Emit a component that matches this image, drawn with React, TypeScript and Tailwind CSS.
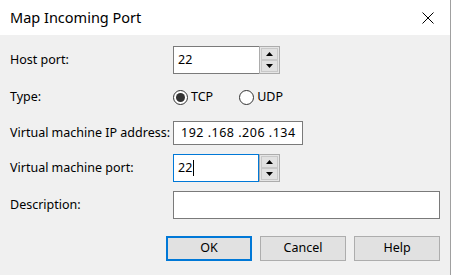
const font = { fontFamily: '"Noto Sans", "Liberation Sans", sans-serif' };

function Spinner({ value, focused }: { value: string; focused?: boolean }) {
  return (
    <div className="flex h-[28px] w-[107px]">
      <div
        className={
          'flex flex-1 items-center border bg-white pl-[4px] text-black ' +
          (focused ? 'border-[#0078d7]' : 'border-[#7a7a7a] border-r-0')
        }
      >
        {value}
        {focused && <span className="ml-[1px] h-[16px] w-[1px] bg-black" />}
      </div>
      <div className="flex w-[21px] flex-col border border-[#acacac] bg-[#e5e5e5] p-[1px]">
        <div className="flex flex-1 items-center justify-center border border-[#c8c8c8] bg-[#e1e1e1]">
          <svg width="7" height="4" viewBox="0 0 7 4">
            <path d="M3.5 0 L7 4 L0 4 Z" fill="#000" />
          </svg>
        </div>
        <div className="flex flex-1 items-center justify-center border border-[#c8c8c8] bg-[#e1e1e1]">
          <svg width="7" height="4" viewBox="0 0 7 4">
            <path d="M0 0 L7 0 L3.5 4 Z" fill="#000" />
          </svg>
        </div>
      </div>
    </div>
  );
}

function Radio({ label, checked }: { label: string; checked?: boolean }) {
  return (
    <div className="flex items-center gap-[3px]">
      <span className="flex h-[15px] w-[15px] items-center justify-center rounded-full border border-[#333] bg-white">
        {checked && <span className="h-[9px] w-[9px] rounded-full bg-[#333]" />}
      </span>
      <span>{label}</span>
    </div>
  );
}

function Button({ label, primary }: { label: string; primary?: boolean }) {
  return (
    <div
      className={
        'flex h-[25px] w-[86px] items-center justify-center bg-[#e1e1e1] text-black ' +
        (primary ? 'border-2 border-[#0078d7]' : 'border border-[#adadad]')
      }
    >
      {label}
    </div>
  );
}

export default function App() {
  return (
    <div
      className="flex h-[275px] w-[451px] flex-col overflow-hidden border-r border-[#a0a0a0] bg-[#f0f0f0] text-[12.5px] text-black"
      style={font}
    >
      <div className="flex h-[35px] shrink-0 items-center justify-between bg-white pl-[10px] pr-[16px]">
        <span className="text-[14.5px] text-[#000]">Map Incoming Port</span>
        <svg width="12" height="12" viewBox="0 0 12 12">
          <path d="M0.5 0.5 L11.5 11.5 M11.5 0.5 L0.5 11.5" stroke="#000" strokeWidth="1" />
        </svg>
      </div>

      <div className="flex flex-col pl-[10px]">
        <div className="mt-[11px] flex h-[28px] items-center">
          <span className="w-[163px]">Host port:</span>
          <Spinner value="22" />
        </div>

        <div className="mt-[14px] flex h-[18px] items-center">
          <span className="w-[163px]">Type:</span>
          <div className="flex items-center gap-[26px]">
            <Radio label="TCP" checked />
            <Radio label="UDP" />
          </div>
        </div>

        <div className="mt-[15px] flex h-[24px] items-center">
          <span className="w-[163px]">Virtual machine IP address:</span>
          <div className="flex h-[24px] w-[130px] items-center border border-[#7a7a7a] bg-white pl-[7px] tracking-[0.5px]">
            192 .168 .206 .134
          </div>
        </div>

        <div className="mt-[9px] flex h-[28px] items-center">
          <span className="w-[163px]">Virtual machine port:</span>
          <Spinner value="22" focused />
        </div>

        <div className="mt-[9px] flex h-[28px] items-center">
          <span className="w-[163px]">Description:</span>
          <div className="h-[28px] w-[267px] border border-[#7a7a7a] bg-white" />
        </div>

        <div className="mt-[17px] flex gap-[8px] pl-[156px]">
          <Button label="OK" primary />
          <Button label="Cancel" />
          <Button label="Help" />
        </div>
      </div>
    </div>
  );
}
